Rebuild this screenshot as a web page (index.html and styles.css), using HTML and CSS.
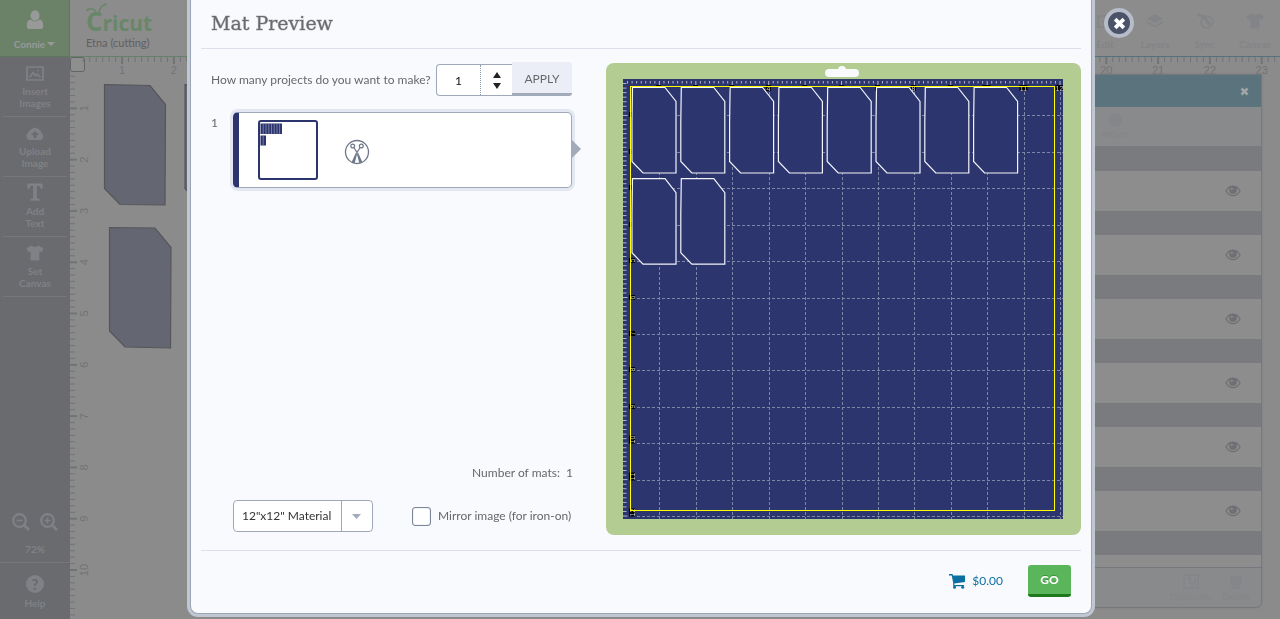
FILE: index.html
```html
<!DOCTYPE html>
<html lang="en">
<head>
<meta charset="utf-8">
<title>Mat Preview</title>
<link rel="stylesheet" href="styles.css">
</head>
<body>
<svg width="0" height="0" class="defs" aria-hidden="true">
  <symbol id="i-eye" viewBox="0 0 16 12"><path d="M1 6C4.500-.5 11.500-.5 15 6C11.500 12.200 4.500 12.200 1 6Z" fill="none" stroke="currentColor" stroke-width="1.300"/><circle cx="8" cy="5" r="3.900" fill="currentColor"/><circle cx="6.800" cy="3.800" r="1.100" fill="#8d8d8d"/></symbol>
  <symbol id="i-shirt" viewBox="0 0 18 16"><path d="M5.500.5Q9 3.500 12.500.5L17.500 3.200L15.800 7L13.400 6.200V15.500H4.600V6.200L2.200 7L.5 3.200Z" fill="currentColor"/></symbol>
  <symbol id="i-x" viewBox="0 0 12 12"><path d="M2 2L10 10M10 2L2 10" stroke="currentColor" stroke-width="3.400"/></symbol>
</svg>
<div class="app">
  <aside class="sidebar">
    <button class="user">
      <svg width="18" height="20" viewBox="0 0 18 20"><ellipse cx="9" cy="5.500" rx="4.500" ry="5.300" fill="currentColor"/><path d="M4.500 9.500Q1 10 .8 15V17Q1 19 3 19H15Q17 19 17.200 17V15Q17 10 13.500 9.500Q9 13.500 4.500 9.500Z" fill="currentColor"/></svg>
      <span>Connie <svg width="8" height="4" viewBox="0 0 8 4"><path d="M0 0H8L4 4Z" fill="currentColor"/></svg></span>
    </button>
    <nav class="nav">
      <button class="nav-item"><svg width="18" height="15" viewBox="0 0 18 15"><path d="M1 1H17V14H1Z" fill="none" stroke="currentColor" stroke-width="1.700"/><path d="M3.500 11.500L7 6.500L9.200 9.500L11 8L14.500 11.500M11.500 4.500H13" fill="none" stroke="currentColor" stroke-width="1.600"/></svg><span>Insert<br>Images</span></button>
      <button class="nav-item"><svg width="18" height="15" viewBox="0 0 18 15"><path d="M4 14A4 4 0 0 1 2.500 6.500A3 3 0 0 1 5 3.800A5 5 0 0 1 13.500 4.200A3 3 0 0 1 15.500 7.500A3.500 3.500 0 0 1 14.500 14Z" fill="currentColor"/><path d="M9 5L13 9H10.400V12H7.600V9H5Z" fill="#6a6b6f"/></svg><span>Upload<br>Image</span></button>
      <button class="nav-item"><svg width="18" height="18" viewBox="0 0 18 18"><path d="M1.500.5H16.500V6H14.800Q14.300 2.800 12 2.800H10.800V15.300L13.500 16V17.800H4.500V16L7.200 15.300V2.800H6Q3.700 2.800 3.200 6H1.500Z" fill="currentColor"/></svg><span>Add<br>Text</span></button>
      <button class="nav-item"><svg width="18" height="16"><use href="#i-shirt"/></svg><span>Set<br>Canvas</span></button>
    </nav>
    <div class="zoom">
      <div class="zoom-buttons">
        <button aria-label="Zoom out"><svg width="18" height="18" viewBox="0 0 18 18"><circle cx="7.500" cy="7.500" r="6.300" fill="none" stroke="currentColor" stroke-width="2.200"/><path d="M4.500 7.500H10.500" stroke="currentColor" stroke-width="1.500"/><path d="M12 12L17 17" stroke="currentColor" stroke-width="2.700"/></svg></button>
        <button aria-label="Zoom in"><svg width="18" height="18" viewBox="0 0 18 18"><circle cx="7.500" cy="7.500" r="6.300" fill="none" stroke="currentColor" stroke-width="2.200"/><path d="M4.500 7.500H10.500M7.500 4.500V10.500" stroke="currentColor" stroke-width="1.500"/><path d="M12 12L17 17" stroke="currentColor" stroke-width="2.700"/></svg></button>
      </div>
      <span>72%</span>
    </div>
    <button class="help"><i class="help-mark">?</i><span>Help</span></button>
  </aside>

  <main class="main">
    <header class="topbar">
      <div class="brand">
        <div class="logo">Cricut<svg class="antennae" width="22" height="14" viewBox="0 0 22 14"><path d="M1 7Q8 3 11.500 12M13 12Q13 3 19 1.500" fill="none" stroke="currentColor" stroke-width="1.400"/><circle cx="1.500" cy="7" r="1.300" fill="currentColor"/><circle cx="19.500" cy="1.500" r="1.300" fill="currentColor"/></svg></div>
        <div class="project">Etna (cutting)</div>
      </div>
      <div class="tools">
        <button class="tool"><svg width="18" height="16" viewBox="0 0 18 16"><path d="M13 3H2V14H14V8M7 9L15 1" fill="none" stroke="currentColor" stroke-width="1.500"/></svg><span>Edit</span></button>
        <button class="tool"><svg width="18" height="16" viewBox="0 0 18 16"><path d="M9 1L17 5.500L9 10L1 5.500Z" fill="currentColor"/><path d="M1 9L9 13.500L17 9" fill="none" stroke="currentColor" stroke-width="1.500"/></svg><span>Layers</span></button>
        <button class="tool"><svg width="18" height="16" viewBox="0 0 18 16"><path d="M1 1L8 4L14 12" fill="none" stroke="currentColor" stroke-width="3"/><circle cx="11" cy="9" r="6" fill="none" stroke="currentColor" stroke-width="1.500"/></svg><span>Sync</span></button>
        <button class="tool"><svg width="18" height="16"><use href="#i-shirt"/></svg><span>Canvas</span></button>
      </div>
    </header>
    <div class="workspace">
      <svg class="canvas" id="canvas">
        <g fill="#646671" stroke="#56565a" stroke-width="1.200">
          <path d="M34.500 27.500L80 28.500L95.500 47.500L95 148L50 147.500L34.500 131.500Z"/>
          <path d="M115 27.500L160 28.500L176 47.500L175 148L130 147.500L115 131.500Z"/>
          <path d="M39.500 170.500L85 171L101 190.500L100.500 291L55 290L39.500 274Z"/>
        </g>
        <rect x=".5" y=".5" width="14" height="14" rx="2" fill="#8e8e8e" stroke="#626368"/>
      </svg>
      <section class="layers">
        <div class="layers-head"><button aria-label="Close layers"><svg width="9" height="9"><use href="#i-x"/></svg></button></div>
        <div class="layers-tools"><button><i></i>Attach</button></div>
        <ul class="layer-list" id="layers"></ul>
        <div class="layers-foot">
          <button><svg width="16" height="15" viewBox="0 0 16 15"><path d="M1 1H15V14H1ZM4 5L7 4V10M12 4V10H8" fill="none" stroke="currentColor" stroke-width="2"/></svg>Duplicate</button>
          <button><svg width="16" height="15" viewBox="0 0 16 15"><path d="M2 2H14L12 15H4Z" fill="currentColor"/></svg>Delete</button>
        </div>
      </section>
    </div>
  </main>
</div>

<div class="overlay">
  <section class="modal" id="modal" role="dialog" aria-labelledby="title">
    <button class="close" aria-label="Close"><svg width="13" height="13"><use href="#i-x"/></svg></button>
    <header class="modal-head"><h1 id="title">Mat Preview</h1></header>
    <div class="modal-body">
      <div class="settings">
        <div class="count-row">
          <label for="count">How many projects do you want to make?</label>
          <div class="spinner">
            <input id="count" type="text" value="1">
            <div class="steps">
              <button aria-label="More"><svg width="8" height="6" viewBox="0 0 8 6"><path d="M0 6L4 0L8 6Z" fill="#222"/></svg></button>
              <button aria-label="Fewer"><svg width="8" height="6" viewBox="0 0 8 6"><path d="M0 0L4 6L8 0Z" fill="#222"/></svg></button>
            </div>
          </div>
          <button class="apply">APPLY</button>
        </div>
        <div class="mat-row">
          <span class="mat-number">1</span>
          <div class="mat-card">
            <svg class="thumb" width="60" height="60" viewBox="0 0 60 60"><rect x="1" y="1" width="58" height="58" rx="2" fill="#fff" stroke="#2c356e" stroke-width="2"/><path d="M2.500 3.500H24V14H2.500ZM2.500 15.500H8V25.500H2.500Z" fill="#2c356e"/><path d="M5.200 4V14M8 4V14M10.800 4V14M13.500 4V14M16.200 4V14M19 4V14M21.600 4V14M5.200 16V25" stroke="#969bbb" stroke-width=".7"/></svg>
            <svg class="scissors" width="26" height="26" viewBox="0 0 26 26"><circle cx="13" cy="13" r="11.500" fill="none" stroke="#6d7789" stroke-width="1.300"/><g fill="none" stroke="#6d7789" stroke-width="1.200"><circle cx="8.700" cy="7" r="1.900"/><circle cx="17.300" cy="7" r="1.900"/><path d="M9.800 8.500L13 13.500M16.200 8.500L13 13.500"/></g><path d="M12 11.500L13.800 13L18.300 23L15.400 24.400ZM14 11.500L12.200 13L7.700 23L10.600 24.400Z" fill="#6d7789"/></svg>
          </div>
        </div>
        <p class="mat-total">Number of mats:&nbsp; 1</p>
        <div class="options">
          <div class="material">
            <select aria-label="Material size"><option>12"x12" Material</option></select>
            <svg width="9" height="5" viewBox="0 0 9 5"><path d="M0 0H9L4.500 5Z" fill="#a2abbc"/></svg>
          </div>
          <div class="mirror"><input type="checkbox" id="mirror"><label for="mirror">Mirror image (for iron-on)</label></div>
        </div>
      </div>
      <div class="mat">
        <svg class="handle" width="34" height="12" viewBox="0 0 34 12"><rect y="3" width="34" height="8" rx="4" fill="#f8fafd"/><circle cx="17" cy="4" r="4" fill="#f8fafd"/></svg>
        <svg class="mat-grid" id="mat" viewBox="0 0 440 440"></svg>
      </div>
    </div>
    <footer class="modal-foot">
      <a class="cart" href="#"><svg width="17" height="15" viewBox="0 0 17 15"><path d="M0 0H3.500L4 1.500H16V8L5.300 9.500V11H15V12.200H4.200V9L2.700 1.500H0Z" fill="currentColor"/><circle cx="5.500" cy="13.300" r="1.500" fill="currentColor"/><circle cx="13.700" cy="13.300" r="1.500" fill="currentColor"/></svg>$0.00</a>
      <button class="go">GO</button>
    </footer>
  </section>
</div>
<script src="app.js"></script>
</body>
</html>
```
FILE: styles.css
```css
* { box-sizing: border-box; }
body { margin: 0; font: 12px/16px Lato, sans-serif; color: #66686c; overflow: hidden; }
button { font: inherit; color: inherit; background: none; border: 0; padding: 0; margin: 0; }
svg { display: block; }
.defs { position: absolute; }

.app { display: flex; height: 100vh; background: #8b8b8b; }
.sidebar { width: 70px; display: flex; flex-direction: column; background: #6a6b6f; color: #808186; font-size: 10px; line-height: 12px; font-weight: 700; }
.user { height: 57px; display: flex; flex-direction: column; align-items: center; justify-content: space-between; padding: 10px 0 6px; background: #6b8168; border: solid #5f775d; border-width: 0 1px 1px 0; color: #989a99; }
.user span { display: flex; align-items: center; gap: 2px; }
.nav { display: flex; flex-direction: column; padding: 0 3px; }
.nav-item { height: 60px; display: flex; flex-direction: column; align-items: center; justify-content: flex-end; gap: 4px; padding-bottom: 7px; border-bottom: 1px solid #76777b; }
.zoom { margin-top: auto; height: 49px; display: flex; flex-direction: column; align-items: center; justify-content: space-between; padding-bottom: 7px; }
.zoom-buttons { display: flex; gap: 10px; }
.help { height: 57px; display: flex; flex-direction: column; align-items: center; gap: 4px; padding-top: 12px; border-top: 1px solid #76777b; }
.help-mark { width: 18px; height: 18px; border-radius: 50%; background: #808186; color: #6a6b6f; font: 900 15px/18px Lato, sans-serif; }

.main { flex: 1; min-width: 0; display: flex; flex-direction: column; }
.topbar { height: 57px; display: flex; justify-content: space-between; border-bottom: 1px solid; border-image: linear-gradient(90deg, #67806a 50%, #54727e 50%) 1; background: #8c8c8c; }
.brand { padding: 6px 16px; }
.logo { position: relative; height: 30px; color: #698768; font: 700 21px/30px "Open Sans", sans-serif; }
.logo::first-letter { font-size: 26px; }
.antennae { position: absolute; left: 0; top: -3px; }
.project { font-size: 11px; line-height: 14px; color: #5f6063; }
.tools { display: flex; color: #838487; font-size: 10px; font-weight: 700; line-height: 14px; }
.tool { width: 50px; display: flex; flex-direction: column; align-items: center; gap: 8px; padding-top: 13px; }
.workspace { position: relative; flex: 1; overflow: hidden; }
.canvas { width: 100%; height: 100%; }
.canvas text { font: 11px "Liberation Sans", sans-serif; fill: #727378; text-anchor: middle; }

.layers { position: absolute; right: 18px; top: 17px; bottom: 11px; width: 260px; display: flex; flex-direction: column; border: 1px solid #77787d; border-radius: 0 0 6px 6px; background: #898a8c; box-shadow: 0 0 3px #808185; }
.layers-head { height: 32px; flex: none; display: flex; align-items: center; justify-content: flex-end; padding-right: 12px; background: #5b737d; color: #a0a5a8; }
.layers-tools { height: 39px; flex: none; padding: 6px 132px 0 0; display: flex; justify-content: flex-end; color: #848588; font-size: 10px; line-height: 14px; }
.layers-tools button { display: flex; flex-direction: column; align-items: center; }
.layers-tools i { width: 14px; height: 14px; border-radius: 50%; background: #858689; }
.layer-list { flex: 1; min-height: 0; overflow: hidden; list-style: none; margin: 0; padding: 1px 0 0; background: #7a7b7f; }
.layer-list li { display: flex; align-items: center; justify-content: flex-end; height: 40px; margin: 24px 0; padding-right: 20px; background: #8d8d8d; color: #6f7073; }
.layers-foot { height: 40px; flex: none; display: flex; justify-content: flex-end; gap: 10px; padding: 6px 10px 0; border-top: 1px solid #77787d; color: #858689; font-size: 10px; line-height: 14px; }
.layers-foot button { display: flex; flex-direction: column; align-items: center; }

.overlay { position: fixed; inset: 0; display: flex; justify-content: center; align-items: flex-start; padding-left: 2px; }
.modal { position: relative; width: 902px; background: #f9fafd; border: 1px solid #9aa5b5; border-top: 0; border-radius: 0 0 8px 8px; box-shadow: 0 0 0 3px #c1c7d2; padding: 0 10px; }
.close { position: absolute; right: -43px; top: 8px; width: 30px; height: 30px; display: grid; place-items: center; border: 4px solid #b6bcc9; border-radius: 50%; background: #4a5367; color: #fff; }
.modal-head { height: 49px; border-bottom: 1px solid #dcdfec; padding: 10px 10px 0; }
h1 { margin: 0; font: 19px/26px "DejaVu Serif", serif; color: #696b6e; -webkit-text-stroke: 1px rgba(105, 107, 110, 0.4); }
.modal-body { display: flex; justify-content: space-between; padding: 14px 0 15px; }
.settings { width: 374px; display: flex; flex-direction: column; }
.count-row { display: flex; align-items: flex-end; height: 33px; padding-right: 3px; }
.count-row label { flex: 1; padding-left: 10px; line-height: 32px; white-space: nowrap; }
.spinner { flex: none; width: 76px; height: 32px; display: flex; background: #fff; border: 1px solid #9fa8b8; border-right: 0; border-radius: 4px 0 0 4px; }
.spinner input { width: 44px; border: 0; border-right: 1px dotted #8b97aa; background: none; text-align: center; font: 12px Lato, sans-serif; color: #111; padding: 0; }
.steps { flex: 1; display: flex; flex-direction: column; align-items: center; justify-content: center; gap: 5px; }
.apply { flex: none; width: 60px; height: 34px; padding-top: 2px; background: #ebeef6; border-bottom: 3px solid #a2abba; border-radius: 0 3px 3px 0; }
.mat-row { display: flex; margin-top: 16px; padding: 0 3px 0 10px; }
.mat-number { width: 22px; line-height: 22px; }
.mat-card { flex: 1; position: relative; height: 76px; display: flex; align-items: center; gap: 26px; padding-left: 19px; background: #fff; border: 1px solid #9fa8b8; border-left: 6px solid #2c356e; border-radius: 5px; box-shadow: 0 0 0 3px #e2e7f1; }
.mat-card::after { content: ""; position: absolute; left: 100%; top: 26px; border: 10px solid transparent; border-left-color: #a2abba; border-right: 0; }
.scissors { margin-top: 4px; }
.mat-total { margin: auto 0 0; padding-right: 2px; text-align: right; }
.options { display: flex; align-items: center; gap: 39px; margin: 19px 0 3px; padding-left: 32px; height: 32px; }
.material { position: relative; width: 140px; height: 32px; }
.material select { appearance: none; width: 100%; height: 100%; padding: 0 32px 2px 8px; border: 1px solid #9fa8b8; border-radius: 4px; background: linear-gradient(#9fa8b8, #9fa8b8) 107px 0 / 1px 100% no-repeat #fff; font: 12px Lato, sans-serif; color: #333; }
.material svg { position: absolute; right: 12px; top: 14px; pointer-events: none; }
.mirror { display: flex; align-items: center; gap: 7px; white-space: nowrap; }
.mirror input { appearance: none; width: 19px; height: 19px; margin: 0; border: 1px solid #7d8698; border-radius: 3px; background: #fff; box-shadow: inset 0 0 1px #7d8698; }
.mat { position: relative; width: 475px; padding: 16px 18px 16px 17px; border-radius: 8px; background: #b3cc92; }
.handle { position: absolute; left: 219px; top: 3px; }
.mat-grid { width: 100%; background: #2c356e; }
.mat-grid text { font: 7px "Liberation Sans", sans-serif; fill: #d0d3df; text-anchor: middle; }
.modal-foot { display: flex; align-items: flex-start; justify-content: flex-end; gap: 25px; height: 63px; padding: 14px 10px 0; border-top: 1px solid #dcdfec; }
.cart { display: flex; align-items: center; gap: 6px; height: 32px; color: #0a70a2; text-decoration: none; }
.go { width: 43px; height: 32px; background: #5bb65b; border-bottom: 3px solid #1c7a1c; border-radius: 3px; color: #fff; font-weight: 900; text-shadow: 0 -1px 0 #3d8f3d; }
```
FILE: app.js
```js
const make = (parent, name, attrs, text) => {
  const el = document.createElementNS("http://www.w3.org/2000/svg", name);
  for (const key in attrs) el.setAttribute(key, attrs[key]);
  if (text !== undefined) el.textContent = text;
  parent.appendChild(el);
  return el;
};

// Canvas rulers: one inch is divided into eight parts.
const canvas = document.getElementById("canvas");
const origin = canvas.getBoundingClientRect();
const dialog = document.getElementById("modal").getBoundingClientRect();
const inch = 51.8, inchY = 51.3;
for (let i = 2; i * inch / 8 < origin.width; i++) {
  const x = 0.3 + i * inch / 8, major = i % 8 === 0;
  make(canvas, "path", { d: `M${x} 0V${major ? 7 : 5}`, stroke: "#727378", "stroke-width": major ? 2 : 1 });
  const page = origin.left + x;
  const covered = page > dialog.left - 8 && page < dialog.right + 8;
  if (major && !covered) make(canvas, "text", { x, y: 17 }, i / 8);
}
for (let i = 3; i * inchY / 8 < origin.height; i++) {
  const y = i * inchY / 8, major = i % 8 === 0;
  make(canvas, "path", { d: `M0 ${y}H${major ? 7 : 5}`, stroke: "#727378", "stroke-width": major ? 2 : 1 });
  if (major) make(canvas, "text", { transform: `translate(18 ${y}) rotate(-90)` }, i / 8);
}

// Layer rows
document.getElementById("layers").innerHTML =
  Array(7).fill('<li><svg width="16" height="12"><use href="#i-eye"/></svg></li>').join("");

// Cutting mat
const mat = document.getElementById("mat");
const step = 36.42;
for (let i = 1; i < 97; i++) {
  const p = i * step / 8;
  make(mat, "path", { d: `M${p} 2V${i % 8 ? 4.5 : 6}M0 ${p}H${i % 8 ? 3.5 : 4.5}`, stroke: "#c3c7d6", "stroke-width": 0.9 });
}
for (let n = 1; n <= 12; n++) {
  const p = Math.round(n * step) + 0.5;
  make(mat, "path", { d: `M${p} 8V440M14 ${p}H440`, stroke: "#7e86a6", "stroke-width": 1, "stroke-dasharray": "3 2" });
  const w = n > 9 ? 8 : 5;
  make(mat, "rect", { x: p - w / 2 - 1, y: 6, width: w, height: 6, fill: "#000" });
  make(mat, "text", { x: p - 1, y: 12 }, n);
  const q = p - (n > 9 ? 4 : 1);
  make(mat, "rect", { x: 6, y: q - w / 2, width: n < 5 ? 3 : 6, height: w, fill: "#000" });
  if (n > 4) make(mat, "text", { transform: `translate(12 ${q}) rotate(-90)` }, n);
}
for (let k = 0; k < 10; k++) {
  const x = 9 + (k % 8) * 48.8, y = k < 8 ? 8.5 : 99.7;
  make(mat, "path", {
    d: `M${x + 0.5} ${y}H${x + 33}L${x + 44} ${y + 14}V${y + 85.5}H${x + 11}L${x} ${y + 74}V${y + 35}Z`,
    fill: "#2c356e", stroke: "#f4f5fa", "stroke-width": 1.2
  });
}
make(mat, "rect", { x: 7.5, y: 7.5, width: 424, height: 424, fill: "none", stroke: "#ff0" });
```
